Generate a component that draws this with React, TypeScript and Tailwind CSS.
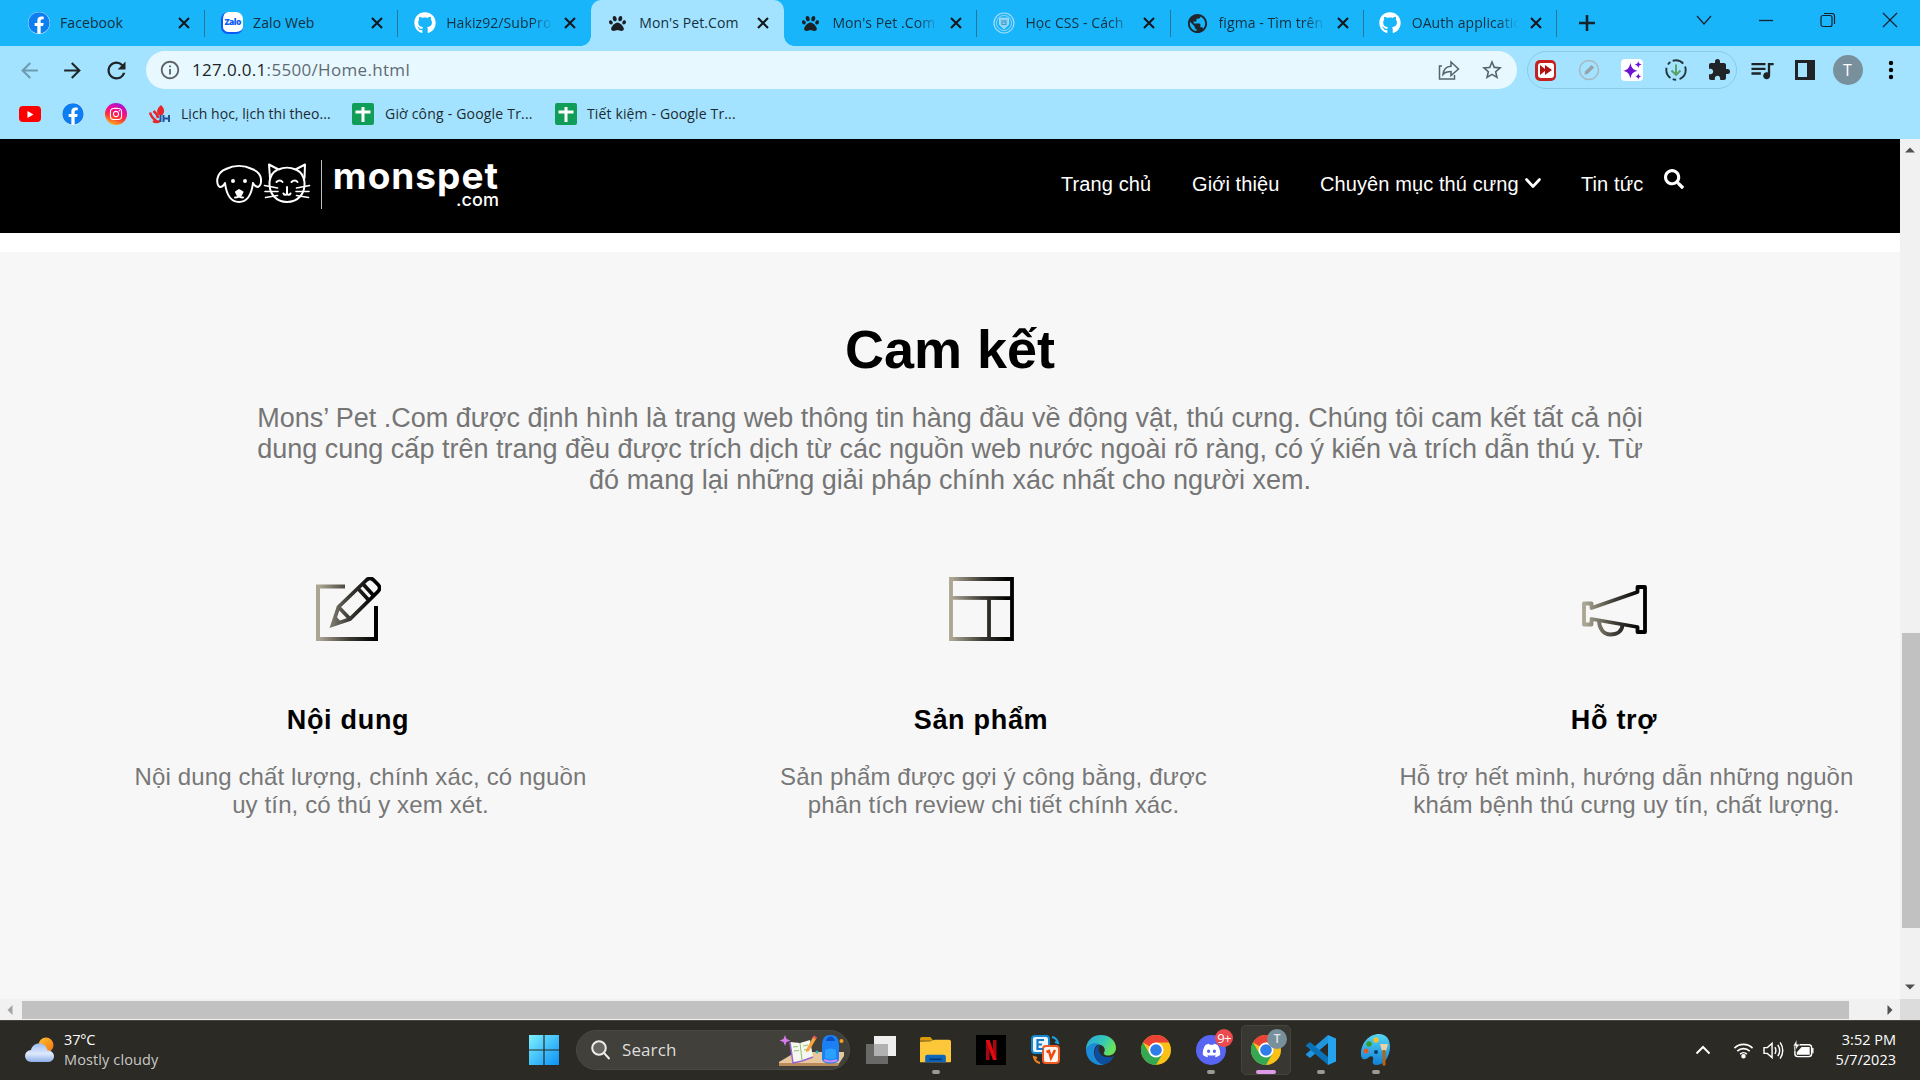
import type { ReactNode } from "react";
import { FaFacebook, FaGithub, FaPaw, FaInstagram, FaDiscord, FaSearch } from "react-icons/fa";
import { MdArrowBack, MdArrowForward, MdRefresh, MdStarBorder, MdInfoOutline, MdExtension, MdQueueMusic, MdPublic } from "react-icons/md";

const Close = () => (
  <svg viewBox="0 0 12 12" className="h-3 w-3 shrink-0">
    <path d="M1 1l10 10M11 1L1 11" stroke="#14181c" strokeWidth="2.1" />
  </svg>
);

const FacebookIcon = () => (
  <span className="flex h-[22px] w-[22px] items-center justify-center rounded-full bg-white">
    <FaFacebook className="h-[22px] w-[22px] text-[#0d7df2]" />
  </span>
);

const ZaloIcon = () => (
  <span className="flex h-[22px] w-[22px] items-center justify-center rounded-[7px] border-b-2 border-l-2 border-[#0a5bf5] bg-white">
    <span className="font-['Open_Sans',sans-serif] text-[8.5px] leading-none font-extrabold tracking-[-0.6px] text-[#0a5bf5]">Zalo</span>
  </span>
);

const LearnIcon = () => (
  <svg viewBox="0 0 22 22" className="h-[22px] w-[22px]" fill="none" stroke="#a9dcf5">
    <circle cx="11" cy="11" r="10" strokeWidth="1.2" />
    <circle cx="11" cy="11" r="7.6" strokeWidth=".8" />
    <path d="M6.5 6.2h9v6.3L11 16.8l-4.500-4.300z" fill="#8fd2f3" strokeWidth="1" />
    <path d="M9 8v4.500h3.800V8M11 8v3" stroke="#3c9fd0" strokeWidth="1.200" />
  </svg>
);

const tabs: { title: string; icon: ReactNode; active?: boolean; sep?: boolean; fade?: boolean }[] = [
  { title: "Facebook", icon: <FacebookIcon />, sep: true },
  { title: "Zalo Web", icon: <ZaloIcon />, sep: true },
  { title: "Hakiz92/SubProj", icon: <FaGithub className="h-[22px] w-[22px] text-white" />, fade: true },
  { title: "Mon's Pet.Com", icon: <FaPaw className="h-[17px] w-[17px] text-[#1c2024]" />, active: true },
  { title: "Mon's Pet .Com", icon: <FaPaw className="h-[17px] w-[17px] text-[#1c2024]" />, sep: true, fade: true },
  { title: "Học CSS - Cách", icon: <LearnIcon />, sep: true, fade: true },
  { title: "figma - Tìm trên", icon: <MdPublic className="h-[23px] w-[23px] text-[#20272c]" />, sep: true, fade: true },
  { title: "OAuth applicatio", icon: <FaGithub className="h-[22px] w-[22px] text-white" />, sep: true, fade: true },
];

function Tab({ title, icon, active, sep, fade }: (typeof tabs)[number]) {
  return (
    <div className={`relative flex h-[46px] w-[193.1px] shrink-0 items-center pl-[15px] ${active ? "rounded-t-[10px] bg-[#a3e3ff]" : ""}`}>
      {active && (
        <>
          <span className="absolute bottom-0 -left-[10px] h-[10px] w-[10px] bg-[radial-gradient(circle_at_0_0,transparent_9.500px,#a3e3ff_10px)]" />
          <span className="absolute -right-[10px] bottom-0 h-[10px] w-[10px] bg-[radial-gradient(circle_at_100%_0,transparent_9.500px,#a3e3ff_10px)]" />
        </>
      )}
      <span className="flex w-[23px] justify-center">{icon}</span>
      <span className={`ml-[10px] w-[107px] pb-[2px] text-[14px] tracking-[0.080px] whitespace-nowrap text-[#12303f] ${fade ? "[mask-image:linear-gradient(to_right,black_80%,transparent)]" : ""}`}>{title}</span>
      <span className="ml-[11px]"><Close /></span>
      {sep && <span className="absolute top-[10px] right-0 h-[27px] w-px bg-[#2a7596]" />}
    </div>
  );
}

function TabStrip() {
  return (
    <div className="flex h-[46px] bg-[#19b5fb] pl-3">
      {tabs.map((t) => <Tab key={t.title} {...t} />)}
      <div className="flex w-[60px] items-center justify-center">
        <svg viewBox="0 0 16 16" className="h-4 w-4"><path d="M8 0v16M0 8h16" stroke="#14222b" strokeWidth="2.600" /></svg>
      </div>
      <div className="ml-auto flex h-[40px] items-center text-[#14222b]">
        <span className="flex w-[62px] justify-center"><svg viewBox="0 0 16 16" className="h-4 w-4" fill="none" stroke="currentColor" strokeWidth="1.2"><path d="M1 4l7 8 7-8" /></svg></span>
        <span className="flex w-[62px] justify-center"><svg viewBox="0 0 16 16" className="h-4 w-4" stroke="currentColor" strokeWidth="1.300"><path d="M1 8.500h14" /></svg></span>
        <span className="flex w-[62px] justify-center"><svg viewBox="0 0 16 16" className="h-4 w-4" fill="none" stroke="currentColor" strokeWidth="1.200"><rect x="1" y="3.500" width="11" height="11" rx="2" /><path d="M4 1.500h8a2.500 2.500 0 0 1 2.500 2.500v8" /></svg></span>
        <span className="flex w-[61px] justify-center"><svg viewBox="0 0 16 16" className="h-4 w-4" stroke="currentColor" strokeWidth="1.200"><path d="M1 1l14 14M15 1L1 15" /></svg></span>
      </div>
    </div>
  );
}

function Toolbar() {
  return (
    <div className="flex h-[48px] items-center bg-[#a3e3ff] pl-[8px] text-[#202427]">
      <span className="flex w-[43px] justify-center"><MdArrowBack className="h-[25px] w-[25px] text-[#6d9bb0]" /></span>
      <span className="flex w-[43px] justify-center"><MdArrowForward className="h-[25px] w-[25px]" /></span>
      <span className="flex w-[44px] justify-center"><MdRefresh className="h-[27px] w-[27px]" /></span>
      <div className="ml-[8px] flex h-[38px] w-[1371px] shrink-0 items-center rounded-full bg-[#e8f8ff] pl-[13px]">
        <MdInfoOutline className="h-[22px] w-[22px] text-[#5f6368]" />
        <span className="ml-[11px] text-[17px] tracking-[0.320px] text-[#5f6b73]"><span className="text-[#202427]">127.0.0.1</span>:5500/Home.html</span>
        <svg viewBox="0 0 22 22" className="mr-[20px] ml-auto h-[22px] w-[22px]" fill="none" stroke="#56646d" strokeWidth="1.500">
          <path d="M4 7H1.500v13h15v-4" />
          <path d="M5 15.500c.5-5 3-8 8-8.300V3l7.500 7-7.500 6.500v-4c-3.500 0-6 .7-8 3z" />
        </svg>
        <MdStarBorder className="mr-[13px] h-[24px] w-[24px] text-[#56646d]" />
      </div>
      <div className="ml-[10px] flex h-[38px] w-[210px] shrink-0 items-center rounded-full border border-[#8acbe8]">
        <span className="ml-[7px] flex h-[21px] w-[21px] items-center justify-center rounded-[5px] bg-[#c5221f]">
          <span className="flex h-[15px] w-[16px] items-center justify-center rounded-[3px] bg-white">
            <svg viewBox="0 0 12 10" className="h-[10px] w-[12px]" fill="#b01515"><path d="M0 0l5 4V0l7 5-7 5V6l-5 4z" /></svg>
          </span>
        </span>
        <svg viewBox="0 0 22 22" className="ml-[22px] h-[22px] w-[22px]"><circle cx="11" cy="11" r="9.500" fill="none" stroke="#a7b8c0" strokeWidth="1.500" /><path d="M6.500 15.500l.5-3 6.500-6.500 2.800 2.500-6.800 6.500z" fill="#98a3a9" /></svg>
        <span className="ml-[21px] flex h-[22px] w-[22px] items-center justify-center rounded-[4px] bg-white">
          <svg viewBox="0 0 20 20" className="h-[21px] w-[21px]" fill="#6b13d1"><path d="M8 2.500c.9 4.800 2.400 6.700 7 7.700-4.600 1-6.100 2.900-7 7.700-.9-4.800-2.400-6.700-7-7.700 4.600-1 6.100-2.900 7-7.700z" /><path d="M15.500 1c.4 2 1.200 3 3.300 3.300-2.100.4-2.900 1.300-3.300 3.400-.4-2-1.200-3-3.300-3.400 2.100-.3 2.900-1.300 3.300-3.300zM15.500 12.700c.4 1.900 1 2.600 2.900 3-1.900.3-2.500 1.100-2.900 3-.4-1.900-1-2.700-2.900-3 1.900-.4 2.500-1.100 2.900-3z" /></svg>
        </span>
        <svg viewBox="0 0 22 22" className="ml-[22px] h-[22px] w-[22px]" fill="none" strokeWidth="1.900"><circle cx="11" cy="11" r="9.700" stroke="#24343c" strokeDasharray="11.500 3.500 3.500 2.500" /><path d="M11 5.500V15.500M6.500 11.500l4.500 4.500 4.500-4.500" stroke="#5a9e64" /></svg>
        <MdExtension className="ml-[20px] h-[24px] w-[24px] text-[#202427]" />
      </div>
      <span className="ml-[3px] flex w-[43px] justify-center"><MdQueueMusic className="h-[28px] w-[28px]" /></span>
      <span className="flex w-[43px] justify-center">
        <svg viewBox="0 0 20 20" className="h-5 w-5"><path d="M0 0h20v20H0zM3 3v14h9V3z" fillRule="evenodd" fill="#202427" /></svg>
      </span>
      <span className="flex w-[43px] justify-center"><span className="flex h-[30px] w-[30px] items-center justify-center rounded-full bg-[#78909c] text-[16px] text-white">T</span></span>
      <span className="flex w-[43px] justify-center"><svg viewBox="0 0 6 20" className="h-5 w-[6px]"><circle cx="3" cy="3" r="2.200" /><circle cx="3" cy="10" r="2.200" /><circle cx="3" cy="17" r="2.200" /></svg></span>
    </div>
  );
}

const Sheets = () => (
  <svg viewBox="0 0 22 22" className="h-[22px] w-[22px]"><rect width="22" height="22" rx="2" fill="#109d58" /><path d="M11 4v15M3.500 9h15" stroke="white" strokeWidth="3" /></svg>
);

function Bookmarks() {
  return (
    <div className="flex h-[45px] items-center bg-[#a3e3ff] pb-[5px] pl-[19px] text-[14px] whitespace-nowrap text-[#1d2a31]">
      <span className="flex h-[16px] w-[22px] items-center justify-center rounded-[4px] bg-[#f00]"><svg viewBox="0 0 7 8" className="h-[7px] w-[7px]" fill="white"><path d="M0 0l7 4-7 4z" /></svg></span>
      <span className="ml-[21px]"><FacebookIcon /></span>
      <span className="ml-[21px] flex h-[22px] w-[22px] items-center justify-center rounded-full bg-[linear-gradient(200deg,#8a1fe0_5%,#f0089a_35%,#ff2d38_60%,#ffc21a_95%)]"><FaInstagram className="h-[14px] w-[14px] text-white" /></span>
      <svg viewBox="0 0 22 20" className="ml-[22px] h-[20px] w-[22px]" fill="none">
        <path d="M12 1C8 4 7 8 9.500 11h4C16 8 15.500 4 12 1z" fill="#e8262c" />
        <path d="M1 8.500c1 5 4 6.500 7.500 9.500M4.500 7c2 1.500 4 4 4.500 7M4 17c2.500 1.500 5.500 1.500 7-.5" stroke="#e8262c" strokeWidth="2.600" />
        <path d="M11.500 11v7M14.500 11v7M20 11v7M14.500 14.500H20" stroke="#24539c" strokeWidth="2" />
      </svg>
      <span className="ml-[10px] w-[171px] pb-[2px] tracking-[0.050px]">Lịch học, lịch thi theo...</span>
      <Sheets />
      <span className="ml-[11px] w-[170px] pb-[2px] tracking-[0.200px]">Giờ công - Google Tr...</span>
      <Sheets />
      <span className="ml-[10px] pb-[2px] tracking-[0.140px]">Tiết kiệm - Google Tr...</span>
    </div>
  );
}

function Logo() {
  return (
    <div className="ml-[215px] flex h-full w-[290px] shrink-0 text-white">
      <svg viewBox="0 0 108 94" className="h-[94px] w-[108px]" fill="none" stroke="white" strokeWidth="2" strokeLinecap="round" strokeLinejoin="round">
        <path d="M11 30c8-4 18-4 26 0 5 2 8.500 6 9 10 .3 4-.5 7-3 8-2.500 0-4-2-5-4-1 8-4 19-14 19S11 52 10 44c-1 2-2.500 4-5 4-2.500-1-3-4-2.700-8C3 36 6 32 11 30z" />
        <circle cx="18" cy="42" r="1" fill="white" /><circle cx="30" cy="42" r="1" fill="white" />
        <path d="M21 53l3-2 3.500 2-1.500 3h-3.500zM20 58.500c2 0 4-1 4-3 0 2 2 3 4 3" fill="white" />
        <path d="M55 39l-1-13.500 9.500 5c5-2.500 12-2.500 17 0l9.500-5L89.500 39" /><path d="M62 31c-4 2-7 7-7.500 12-.8 12 7 20 17.500 20s18.500-8 17.500-20C89 38 86 33 81 30.500" />
        <path d="M61.500 43c2-2 4.500-2 6 0M76.500 43c2-2 4.500-2 6 0M72 48v7M68.500 54.500c1 2 3.500 1.500 3.500 0 0 1.500 2.500 2 3.500 0" />
        <path d="M49.500 46.500l13 2.500M50 52.500h13M50.500 58.500l12-2M94.500 46.500l-13 2.500M94 52.500H81M93.500 58.500l-12-2" strokeWidth="1.600" />
      </svg>
      <div className="ml-[-2px] mt-[21px] h-[49px] w-px bg-[#bdbdbd]" />
      <div className="ml-[9px] mt-[21px] flex w-[168px] flex-col items-end font-['Inter',sans-serif]">
        <span className="text-[37px] leading-[32px] font-bold tracking-[1px]">monspet</span>
        <span className="text-[18px] leading-[15px] font-medium">.com</span>
      </div>
    </div>
  );
}

function SiteHeader() {
  return (
    <header className="flex h-[94px] shrink-0 bg-black font-['Liberation_Sans',sans-serif] text-[20px] tracking-[0.100px] whitespace-nowrap text-white">
      <Logo />
      <nav className="ml-[556px] flex h-[90px] items-center">
        <span className="w-[131px]">Trang chủ</span>
        <span className="w-[128px]">Giới thiệu</span>
        <span className="flex w-[261px] items-center gap-[5px]">Chuyên mục thú cưng
          <svg viewBox="0 0 18 12" className="mb-[2px] h-[12px] w-[18px]" fill="none" stroke="white" strokeWidth="2.700" strokeLinecap="round" strokeLinejoin="round"><path d="M2.500 2.500L9 9.500l6.500-7" /></svg>
        </span>
        <span className="w-[83px]">Tin tức</span>
        <FaSearch className="mb-[11px] h-[20px] w-[20px]" />
      </nav>
    </header>
  );
}

const Gradient = ({ id }: { id: string }) => (
  <defs><linearGradient id={id} gradientUnits="userSpaceOnUse" x1="0" y1="0" x2="65" y2="0"><stop offset="0.050" stopColor="#aba593" /><stop offset="0.500" stopColor="#3f3d37" /><stop offset="0.900" stopColor="#000" /></linearGradient></defs>
);

const EditIcon = () => (
  <svg viewBox="0 0 65 65" className="h-[65px] w-[65px]" fill="none" stroke="url(#edit)" strokeWidth="4">
    <Gradient id="edit" />
    <path d="M29 9.500H2V62h58V29" />
    <path d="M16.500 48l6-18L50 3.500c3-3 5-3 8 0l3.500 3.500c3 3 3 5 0 8L34 42zM22.500 30L34 42M42 11.500L53.500 24M47 7L58 19" strokeWidth="3.800" />
    <path d="M15 50l5-11 6 7z" fill="url(#edit)" stroke="none" />
  </svg>
);
const LayoutIcon = () => (
  <svg viewBox="0 0 65 65" className="h-[65px] w-[65px]" fill="none" stroke="url(#layout)" strokeWidth="3.800">
    <Gradient id="layout" />
    <path d="M2 2h61v60H2zM40 21v41" />
    <path d="M2 20.900l61 .2" />
  </svg>
);
const MegaphoneIcon = () => (
  <svg viewBox="0 0 65 65" className="h-[65px] w-[65px]" fill="none" stroke="url(#mega)" strokeWidth="3.800" strokeLinejoin="round">
    <Gradient id="mega" />
    <path d="M2 26.500h7.500V31L55.500 15v-5H63v45h-7.500v-5L9.500 42v5.500H2z" />
    <path d="M17 43.500c0 8 4.500 14 11.500 14S40 54 40.500 48" />
  </svg>
);

const features = [
  { icon: <EditIcon />, title: "Nội dung", lines: ["Nội dung chất lượng, chính xác, có nguồn", "uy tín, có thú y xem xét."] },
  { icon: <LayoutIcon />, title: "Sản phẩm", lines: ["Sản phẩm được gợi ý công bằng, được", "phân tích review chi tiết chính xác."] },
  { icon: <MegaphoneIcon />, title: "Hỗ trợ", lines: ["Hỗ trợ hết mình, hướng dẫn những nguồn", "khám bệnh thú cưng uy tín, chất lượng."] },
];

function Page() {
  return (
    <main className="flex h-[860px] w-[1900px] flex-col overflow-hidden bg-white font-['Liberation_Sans',sans-serif]">
      <SiteHeader />
      <section className="mt-[19px] flex-1 bg-[#f7f7f7] text-center whitespace-nowrap">
        <h1 className="pt-[66px] text-[54px] leading-[62px] font-bold text-black">Cam kết</h1>
        <p className="mt-[23px] text-[27px] leading-[31px] text-[#757575]">
          Mons’ Pet .Com được định hình là trang web thông tin hàng đầu về động vật, thú cưng. Chúng tôi cam kết tất cả nội<br />
          dung cung cấp trên trang đều được trích dịch từ các nguồn web nước ngoài rõ ràng, có ý kiến và trích dẫn thú y. Từ<br />
          đó mang lại những giải pháp chính xác nhất cho người xem.
        </p>
        <div className="mt-[81px] ml-[32px] flex">
          {features.map((f) => (
            <article key={f.title} className="flex w-[633px] shrink-0 flex-col items-center">
              {f.icon}
              <h3 className="mt-[62px] pr-px text-[27px] leading-[32px] font-bold tracking-[0.700px] text-black">{f.title}</h3>
              <p className="mt-[27px] pl-[24px] text-[24px] leading-[28px] tracking-[0.130px] text-[#777]">{f.lines[0]}<br />{f.lines[1]}</p>
            </article>
          ))}
        </div>
      </section>
    </main>
  );
}

const Arrow = ({ d, color = "#505050" }: { d: string; color?: string }) => <svg viewBox="0 0 10 10" className="h-[10px] w-[10px] shrink-0"><path d={d} fill={color} /></svg>;

function ChromeGlyph() {
  return (
    <svg viewBox="0 0 30 30" className="h-[30px] w-[30px]">
      <circle cx="15" cy="15" r="15" fill="#fbc116" />
      <path d="M15 15L2 7.500A15 15 0 0 1 28 7.500H15z" fill="#ea4335" />
      <path d="M15 15L8.500 18.750 2 7.500A15 15 0 0 0 15 30l6.500-11.250z" fill="#34a853" />
      <circle cx="15" cy="15" r="7.500" fill="white" /><circle cx="15" cy="15" r="5.800" fill="#2f7de9" />
    </svg>
  );
}

function TaskbarApp({ children, dot, active }: { children: ReactNode; dot?: boolean; active?: boolean }) {
  return (
    <div className="flex w-[55.1px] shrink-0 justify-center">
      <div className={`relative flex h-[50px] w-[50px] items-center justify-center ${active ? "rounded-[5px] border border-[#45443f] bg-[#383732]" : ""}`}>
        {children}
        {dot && <span className="absolute bottom-[1px] h-[4px] w-[8px] rounded-full bg-[#9a9996]" />}
        {active && <span className="absolute bottom-0 h-[4px] w-[20px] rounded-full bg-[#dc9be4]" />}
      </div>
    </div>
  );
}

function Taskbar() {
  return (
    <footer className="flex h-[60px] items-center border-t border-[#454440] bg-[#2b2a25] pb-px text-white">
      <svg viewBox="0 0 30 26" className="ml-[25px] h-[26px] w-[30px]">
        <defs>
          <linearGradient id="sun" x2="1" y2="1"><stop stopColor="#ffc431" /><stop offset="1" stopColor="#f1700f" /></linearGradient>
          <linearGradient id="cloud" x2="0" y2="1"><stop stopColor="#9cbdf5" /><stop offset=".55" stopColor="#dfe9fb" /><stop offset="1" stopColor="#8caee8" /></linearGradient>
        </defs>
        <circle cx="21" cy="8" r="7.500" fill="url(#sun)" />
        <path d="M6 25a6 6 0 0 1 0-12c1-4 4-6.500 8-6.500 4.500 0 7.500 2.500 8.500 7A5.700 5.700 0 0 1 24 25z" fill="url(#cloud)" />
      </svg>
      <div className="ml-[9px] w-[200px] pb-px text-[14.5px] leading-[20px] tracking-[0.120px]"><div className="tracking-[-0.15px]">37°C</div><div className="text-[#c9c9c7]">Mostly cloudy</div></div>
      <svg viewBox="0 0 30 30" className="ml-[265px] h-[30px] w-[30px]">
        <defs><linearGradient id="win" x2="1" y2="1"><stop stopColor="#7df1ff" /><stop offset="1" stopColor="#0a91f5" /></linearGradient></defs>
        <path d="M0 0h14.400v14.400H0zM15.600 0H30v14.400H15.600zM0 15.600h14.400V30H0zM15.600 15.600H30V30H15.600z" fill="url(#win)" />
      </svg>
      <div className="ml-[17px] flex h-[40px] w-[274px] shrink-0 items-center rounded-full border border-[#4a4944] bg-[#41403b] pl-[14px]">
        <svg viewBox="0 0 20 20" className="h-5 w-5" fill="#66655f" stroke="#ededed" strokeWidth="2"><circle cx="8" cy="8" r="6.800" /><path d="M13 13l5.500 6" /></svg>
        <span className="ml-[11px] text-[17px] tracking-[0.100px] text-[#dededc]">Search</span>
        <svg viewBox="0 0 66 34" className="mr-[4px] ml-auto h-[34px] w-[66px]">
          <path d="M0 29l17-10h48v4l-6 9H0z" fill="#e8c79c" /><path d="M0 30h60l-1 3H0z" fill="#b98b5b" />
          <path d="M11 9l10 1 10-3 3 17-11 4-9 2z" fill="#f7f7f2" /><path d="M11 9l3 21 9-2 11-4" fill="none" stroke="#9a65d1" strokeWidth="1.500" /><path d="M21 10l2 17M14 14l5-.5M15 18l5-.5M24 13l5-1M25 17l5-1" stroke="#8fc26a" />
          <path d="M27 17l7-13 3 2-7 12-3 1z" fill="#f9a53b" /><path d="M33.500 4.500l1.500-2 3 2-1 2z" fill="#ef5b5b" />
          <path d="M6 2l1.500 4 4 1.500-4 1.500L6 13l-1.500-4-4-1.500 4-1.500z" fill="#d77bef" />
          <path d="M43 13C43 5 46 2 51.500 2S60 5 60 13v13c0 6-17 6-17 0z" fill="#1c7ff3" /><path d="M47 8c1-6 8-6 9 0z" fill="#0850c5" /><path d="M46 17q5.500-3 11 0v8q-5.500 3-11 0z" fill="#2aa0ff" /><path d="M45 27q6.500 3 13 0" fill="none" stroke="#c98cff" strokeWidth="2" /><circle cx="62.500" cy="8" r="2" fill="#f6a21b" /><circle cx="38" cy="19" r="1.500" fill="#31b6c7" />
        </svg>
      </div>
      <div className="ml-[3px] flex">
        <TaskbarApp><svg viewBox="0 0 30 30" className="h-[30px] w-[30px]"><path d="M8 1h22v20H8z" fill="#eee" /><path d="M0 9h22v20H0z" fill="#696968" /><path d="M8 9h14v12H8z" fill="#b1b1b1" /></svg></TaskbarApp>
        <TaskbarApp dot><svg viewBox="0 0 30 30" preserveAspectRatio="none" className="h-[28px] w-[31px]"><path d="M0 3q0-2 2-2h8l3 4H0z" fill="#d99a0c" /><path d="M0 6l10-.5L14 4h14q2 0 2 2v21q0 1-1 1H0z" fill="#fcc739" /><path d="M5 28v-6q0-2 2-2h16q2 0 2 2v6z" fill="#0d66bd" /><path d="M9 25h12" stroke="#053a78" strokeWidth="2" /></svg></TaskbarApp>
        <TaskbarApp><svg viewBox="0 0 30 30" className="h-[30px] w-[30px]"><path d="M0 0h30v30H0z" /><path d="M10 5h3.500v20H10zM17 5h3.500v20H17z" fill="#a90710" /><path d="M10 5h3.500l7 20H17z" fill="#e50914" /></svg></TaskbarApp>
        <TaskbarApp>
          <svg viewBox="0 0 30 30" className="h-[30px] w-[30px]" fill="none"><rect x="1" y="1" width="17" height="17" rx="3" fill="#e9f6ff" stroke="#1687cf" strokeWidth="2" /><rect x="12" y="11" width="16" height="17" rx="3" fill="#fff4ec" stroke="#ee5a24" strokeWidth="2" /><path d="M13 5H6.500v9H12M6.500 9.500H11" stroke="#1479c4" strokeWidth="2.200" /><path d="M15.500 17l2.500-1 2 7 4-8" stroke="#ea4a16" strokeWidth="2.600" /><path d="M21 2q5 1 6 6l-3-1" stroke="#1aa0de" strokeWidth="2" /><path d="M9 28q-5-1-6-6l3 1" stroke="#f0811e" strokeWidth="2" /></svg>
        </TaskbarApp>
        <TaskbarApp>
          <svg viewBox="0 0 30 30" className="h-[30px] w-[30px]">
            <defs><linearGradient id="edgeA" x2="1" y2=".4"><stop stopColor="#2aa7e0" /><stop offset=".6" stopColor="#35c7b8" /><stop offset="1" stopColor="#67e35b" /></linearGradient></defs>
            <path d="M0 15C0 6 6 0 15 0s15 6 15 13c0 5-4 7.500-8 7.500-3 0-5-1.500-4-3 1.500-2 1-6-3-7.500C9 8 3 10 0 15z" fill="url(#edgeA)" />
            <path d="M0 15C2 9 8 7 13 9c-5 2-6 8-4 13 1.500 4 5 7 10 7.500C8 32 0 24 0 15z" fill="#1a8bd8" />
            <path d="M9 20c-1-5 1-9 5-10.500-2 3-2 7 1 10s8 3.500 13 1.500c-2 4-5 7.500-10 8.500-4 0-8-4-9-9.500z" fill="#0d4f9e" />
          </svg>
        </TaskbarApp>
        <TaskbarApp><ChromeGlyph /></TaskbarApp>
        <TaskbarApp dot>
          <span className="flex h-[30px] w-[30px] items-center justify-center rounded-full bg-[#5865f2]"><FaDiscord className="h-[19px] w-[19px]" /></span>
          <span className="absolute top-[4px] right-[3px] flex h-[18px] w-[18px] items-center justify-center rounded-full bg-[#ec4a4d] text-[13px] leading-none tracking-[-0.5px]">9+</span>
        </TaskbarApp>
        <TaskbarApp active>
          <ChromeGlyph />
          <span className="absolute top-[3px] right-[3px] flex h-[20px] w-[20px] items-center justify-center rounded-full bg-[#78909c] text-[12px] leading-none font-semibold text-[#dfe5e8]">T</span>
        </TaskbarApp>
        <TaskbarApp dot><svg viewBox="0 0 30 30" className="h-[30px] w-[30px]"><path d="M22 0l8 3.500v23L22 30z" fill="#25a4ee" /><path d="M22 0v8L4 23l-4-3v-1z" fill="#2196e0" /><path d="M0 11v-1l4-3 18 15v8z" fill="#0b72b8" /></svg></TaskbarApp>
        <TaskbarApp dot>
          <svg viewBox="0 0 30 32" className="h-[32px] w-[30px]"><defs><linearGradient id="pal" x2="0" y2="1"><stop stopColor="#55d7f5" /><stop offset="1" stopColor="#0f7fd6" /></linearGradient></defs><path d="M18 0C8 0 0 9 0 20c0 7 5 6 8 3 3-2 5 0 4 3-1 3 0 5 4 5 8 0 13-10 13-18C29 5 25 0 18 0z" fill="url(#pal)" /><circle cx="15" cy="6" r="2.700" fill="#fbc02d" /><circle cx="8" cy="10" r="2.700" fill="#3a9d23" /><circle cx="5" cy="17" r="2.500" fill="#e4572e" /><circle cx="15" cy="18" r="2" fill="#0c3b66" /><path d="M19 10h8l-2 7h-4z" fill="#ecd0a6" /><path d="M21.500 16h3v15l-1.500 1-1.500-1z" fill="#b4650f" /></svg>
        </TaskbarApp>
      </div>
      <div className="ml-auto flex items-center pr-[24px]">
        <svg viewBox="0 0 16 10" className="mr-[22px] h-[10px] w-[16px]" fill="none" stroke="white" strokeWidth="2"><path d="M1.500 8.500L8 2l6.500 6.500" /></svg>
        <svg viewBox="0 0 22 18" className="mr-[9px] h-[18px] w-[21px]" fill="none" stroke="white" strokeWidth="1.700"><path d="M1.500 7a13.500 13.500 0 0 1 19 0M4.500 10.200a9.200 9.200 0 0 1 13 0M7.500 13.300a5 5 0 0 1 7 0" /><circle cx="11" cy="15.500" r="1.500" fill="white" /></svg>
        <svg viewBox="0 0 22 20" className="mr-[9px] h-[19px] w-[21px]" fill="none" stroke="white" strokeWidth="1.500"><path d="M1 7v6h3.500L9.500 17.500v-15L4.500 7zM12.500 6.500q2 3.500 0 7M15.500 4q4 6 0 12M18 1.500q5.500 8.500 0 17" /></svg>
        <svg viewBox="0 0 22 20" className="mb-[3px] h-[20px] w-[21px]"><rect x="2" y="5.500" width="17.500" height="12.500" rx="3" fill="none" stroke="white" strokeWidth="1.500" /><path d="M9 8h8.500v8H4v-2.500zM20 9h1.500v5.500H20z" fill="white" /><path d="M4 0L0 7h3l-1 5 5-7H4z" fill="white" stroke="#2b2a25" strokeWidth=".6" /></svg>
        <div className="ml-[12px] w-[70px] pb-px text-right text-[14.5px] leading-[20px] whitespace-nowrap"><div>3:52 PM</div><div>5/7/2023</div></div>
      </div>
    </footer>
  );
}

export default function App() {
  return (
    <div className="flex h-[1080px] w-[1920px] flex-col overflow-hidden font-['Open_Sans',sans-serif]">
      <TabStrip />
      <Toolbar />
      <Bookmarks />
      <div className="flex h-[860px] shrink-0">
        <Page />
        <div className="flex w-[20px] flex-col items-center bg-[#f1f1f1] pt-[6px]">
          <Arrow d="M0 7.500L5 2.500l5 5z" />
          <div className="mt-[478px] ml-[2px] h-[295px] w-[18px] shrink-0 bg-[#c1c1c1]" />
          <span className="mt-[54px]"><Arrow d="M0 2.500h10l-5 5z" /></span>
        </div>
      </div>
      <div className="flex h-[21px] shrink-0 items-center bg-[#f1f1f1]">
        <span className="ml-[5px]"><Arrow d="M7.500 0v10l-5-5z" color="#a3a3a3" /></span>
        <div className="ml-[7px] h-[18px] w-[1827px] bg-[#c1c1c1]" />
        <span className="ml-[36px]"><Arrow d="M2.500 0v10l5-5z" /></span>
        <div className="ml-auto h-full w-[20px] bg-[#dcdcdc]" />
      </div>
      <Taskbar />
    </div>
  );
}
